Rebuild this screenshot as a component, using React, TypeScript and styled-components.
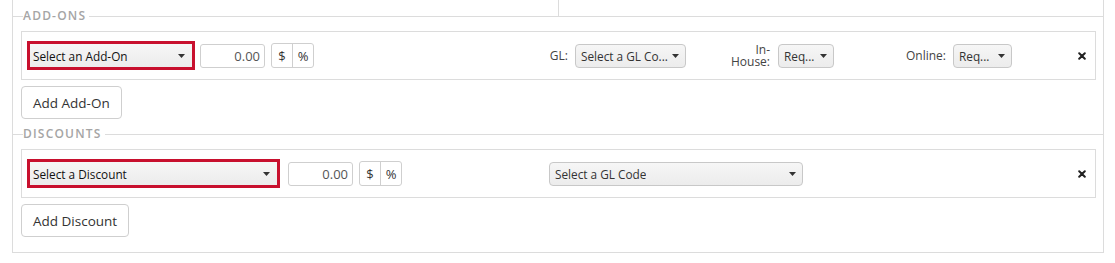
import * as React from 'react';
import styled, { createGlobalStyle } from 'styled-components';

const GlobalStyle = createGlobalStyle`
    html, body {
        margin: 0;
        padding: 0;
        background: #fff;
    }
    body {
        font-family: "Open Sans", "Noto Sans", "Liberation Sans", sans-serif;
        color: #333;
    }
`

/////////////////////////////////////////////////////////////////////////////////////////////////
// Small drawings

const Caret = () => (
    <svg width="7" height="4" viewBox="0 0 7 4">
        <path d="M0 0 L7 0 L3.5 4 Z" fill="#333" />
    </svg>
)

const Cross = () => (
    <svg width="8" height="8" viewBox="0 0 8 8">
        <path d="M1.2 1.2 L6.8 6.8 M6.8 1.2 L1.2 6.8" stroke="#222" strokeWidth="2" strokeLinecap="round" />
    </svg>
)

/////////////////////////////////////////////////////////////////////////////////////////////////
// Pieces

const SelectBox = ({ texto, ancho, error }: { texto: string, ancho: number, error?: boolean }) => (
    <StyledSelect ancho={ancho} error={error}>
        <TextoSelect>{texto}</TextoSelect>
        <Caret />
    </StyledSelect>
)

const Monto = ({ separacion }: { separacion: number }) => (
    <>
        <InputMonto separacion={separacion}>0.00</InputMonto>
        <GrupoToggle>
            <BotonToggle>$</BotonToggle>
            <BotonToggle>%</BotonToggle>
        </GrupoToggle>
    </>
)

/////////////////////////////////////////////////////////////////////////////////////////////////
// Render

export default function App() {
    return (
        <>
            <GlobalStyle />
            <Contenedor>
                <FranjaSuperior>
                    <CeldaSuperior />
                    <div />
                </FranjaSuperior>

                <Seccion>
                    <Titulo><span>Add-Ons</span></Titulo>
                    <FilaItem columnas="373px 286px 148px 178px 1fr">
                        <Celda>
                            <SelectBox texto="Select an Add-On" ancho={168} error />
                            <Monto separacion={5} />
                        </Celda>
                        <Celda fin>
                            <Etiqueta>GL:</Etiqueta>
                            <SelectBox texto="Select a GL Co..." ancho={111} />
                        </Celda>
                        <Celda fin>
                            <EtiquetaDoble>
                                <span>In-</span>
                                <span>House:</span>
                            </EtiquetaDoble>
                            <SelectBox texto="Req..." ancho={56} />
                        </Celda>
                        <Celda fin>
                            <Etiqueta>Online:</Etiqueta>
                            <SelectBox texto="Req..." ancho={59} />
                        </Celda>
                        <Celda fin>
                            <Quitar><Cross /></Quitar>
                        </Celda>
                    </FilaItem>
                    <BotonAgregar>Add Add-On</BotonAgregar>
                </Seccion>

                <Seccion>
                    <Titulo><span>Discounts</span></Titulo>
                    <FilaItem columnas="522px 254px 1fr">
                        <Celda>
                            <SelectBox texto="Select a Discount" ancho={253} error />
                            <Monto separacion={8} />
                        </Celda>
                        <Celda>
                            <SelectBox texto="Select a GL Code" ancho={254} />
                        </Celda>
                        <Celda fin>
                            <Quitar><Cross /></Quitar>
                        </Celda>
                    </FilaItem>
                    <BotonAgregar>Add Discount</BotonAgregar>
                </Seccion>
            </Contenedor>
        </>
    )
}

const Contenedor = styled.div`
    margin-left: 12px;
    width: 1092px;
    box-sizing: border-box;
    border: 1px solid #dcdcdc;
    border-top: none;
    padding-bottom: 15px;
`

const FranjaSuperior = styled.div`
    display: grid;
    grid-template-columns: 546px 1fr;
    height: 16px;
`

const CeldaSuperior = styled.div`
    border-right: 1px solid #dcdcdc;
`

const Seccion = styled.div`
    display: flex;
    flex-direction: column;
    align-items: flex-start;

    & + & {
        margin-top: 15px;
    }
`

const Titulo = styled.div`
    align-self: stretch;
    display: flex;
    align-items: center;
    height: 14px;
    margin-top: -7px;
    font-size: 12px;
    font-weight: 600;
    letter-spacing: 1.2px;
    text-transform: uppercase;
    color: #a5a5a5;

    &::before, &::after {
        content: "";
        height: 1px;
        background: #dcdcdc;
    }
    &::before {
        width: 10px;
    }
    &::after {
        flex: 1;
    }
    span {
        padding: 0 3px 0 0;
        line-height: 14px;
    }
`

const FilaItem = styled.div<{ columnas: string }>`
    align-self: stretch;
    display: grid;
    grid-template-columns: ${({ columnas }) => columnas};
    align-items: center;
    height: 49px;
    box-sizing: border-box;
    margin: 8px 7px 0 8px;
    padding: 0 6px 0 5px;
    border: 1px solid #dcdcdc;
`

const Celda = styled.div<{ fin?: boolean }>`
    display: flex;
    align-items: center;
    justify-content: ${({ fin }) => fin ? 'flex-end' : 'flex-start'};
    gap: 7px;
    min-width: 0;
`

const StyledSelect = styled.div<{ ancho: number, error?: boolean }>`
    display: flex;
    align-items: center;
    justify-content: space-between;
    flex: none;
    width: ${({ ancho }) => ancho}px;
    height: ${({ error }) => error ? 29 : 24}px;
    box-sizing: border-box;
    padding: 0 ${({ error }) => error ? 7 : 6}px 0 ${({ error }) => error ? 3 : 5}px;
    border: ${({ error }) => error ? '3px solid #c8102e' : '1px solid #c8c8c8'};
    border-radius: ${({ error }) => error ? 0 : 4}px;
    background: linear-gradient(#f6f6f6, #ececec);
    font-size: 11.8px;
    color: ${({ error }) => error ? '#111' : '#333'};
    white-space: nowrap;
    overflow: hidden;
`

const TextoSelect = styled.span`
    overflow: hidden;
`

const InputMonto = styled.div<{ separacion: number }>`
    width: 65px;
    height: 24px;
    box-sizing: border-box;
    margin-left: ${({ separacion }) => separacion - 7}px;
    padding: 0 4px;
    border: 1px solid #cfcfcf;
    border-radius: 3px;
    display: flex;
    align-items: center;
    justify-content: flex-end;
    font-size: 13px;
    color: #555;
`

const GrupoToggle = styled.div`
    display: flex;
    height: 25px;
    margin-left: -1px;
    box-sizing: border-box;
    border: 1px solid #cfcfcf;
    border-radius: 3px;
    overflow: hidden;
`

const BotonToggle = styled.div`
    width: 20px;
    display: flex;
    align-items: center;
    justify-content: center;
    font-size: 13px;
    color: #333;
    & + & {
        border-left: 1px solid #cfcfcf;
    }
`

const Etiqueta = styled.div`
    font-size: 12px;
    line-height: 14px;
    color: #444;
`

const EtiquetaDoble = styled.div`
    display: flex;
    flex-direction: column;
    align-items: flex-end;
    font-size: 12px;
    line-height: 12px;
    color: #444;
    margin-right: 1px;
`

const Quitar = styled.div`
    display: flex;
    padding-right: 3px;
`

const BotonAgregar = styled.div`
    margin: 6px 0 0 8px;
    height: 33px;
    box-sizing: border-box;
    padding: 0 11px;
    display: flex;
    align-items: center;
    border: 1px solid #cfcfcf;
    border-radius: 4px;
    font-size: 13.5px;
    color: #333;
`
